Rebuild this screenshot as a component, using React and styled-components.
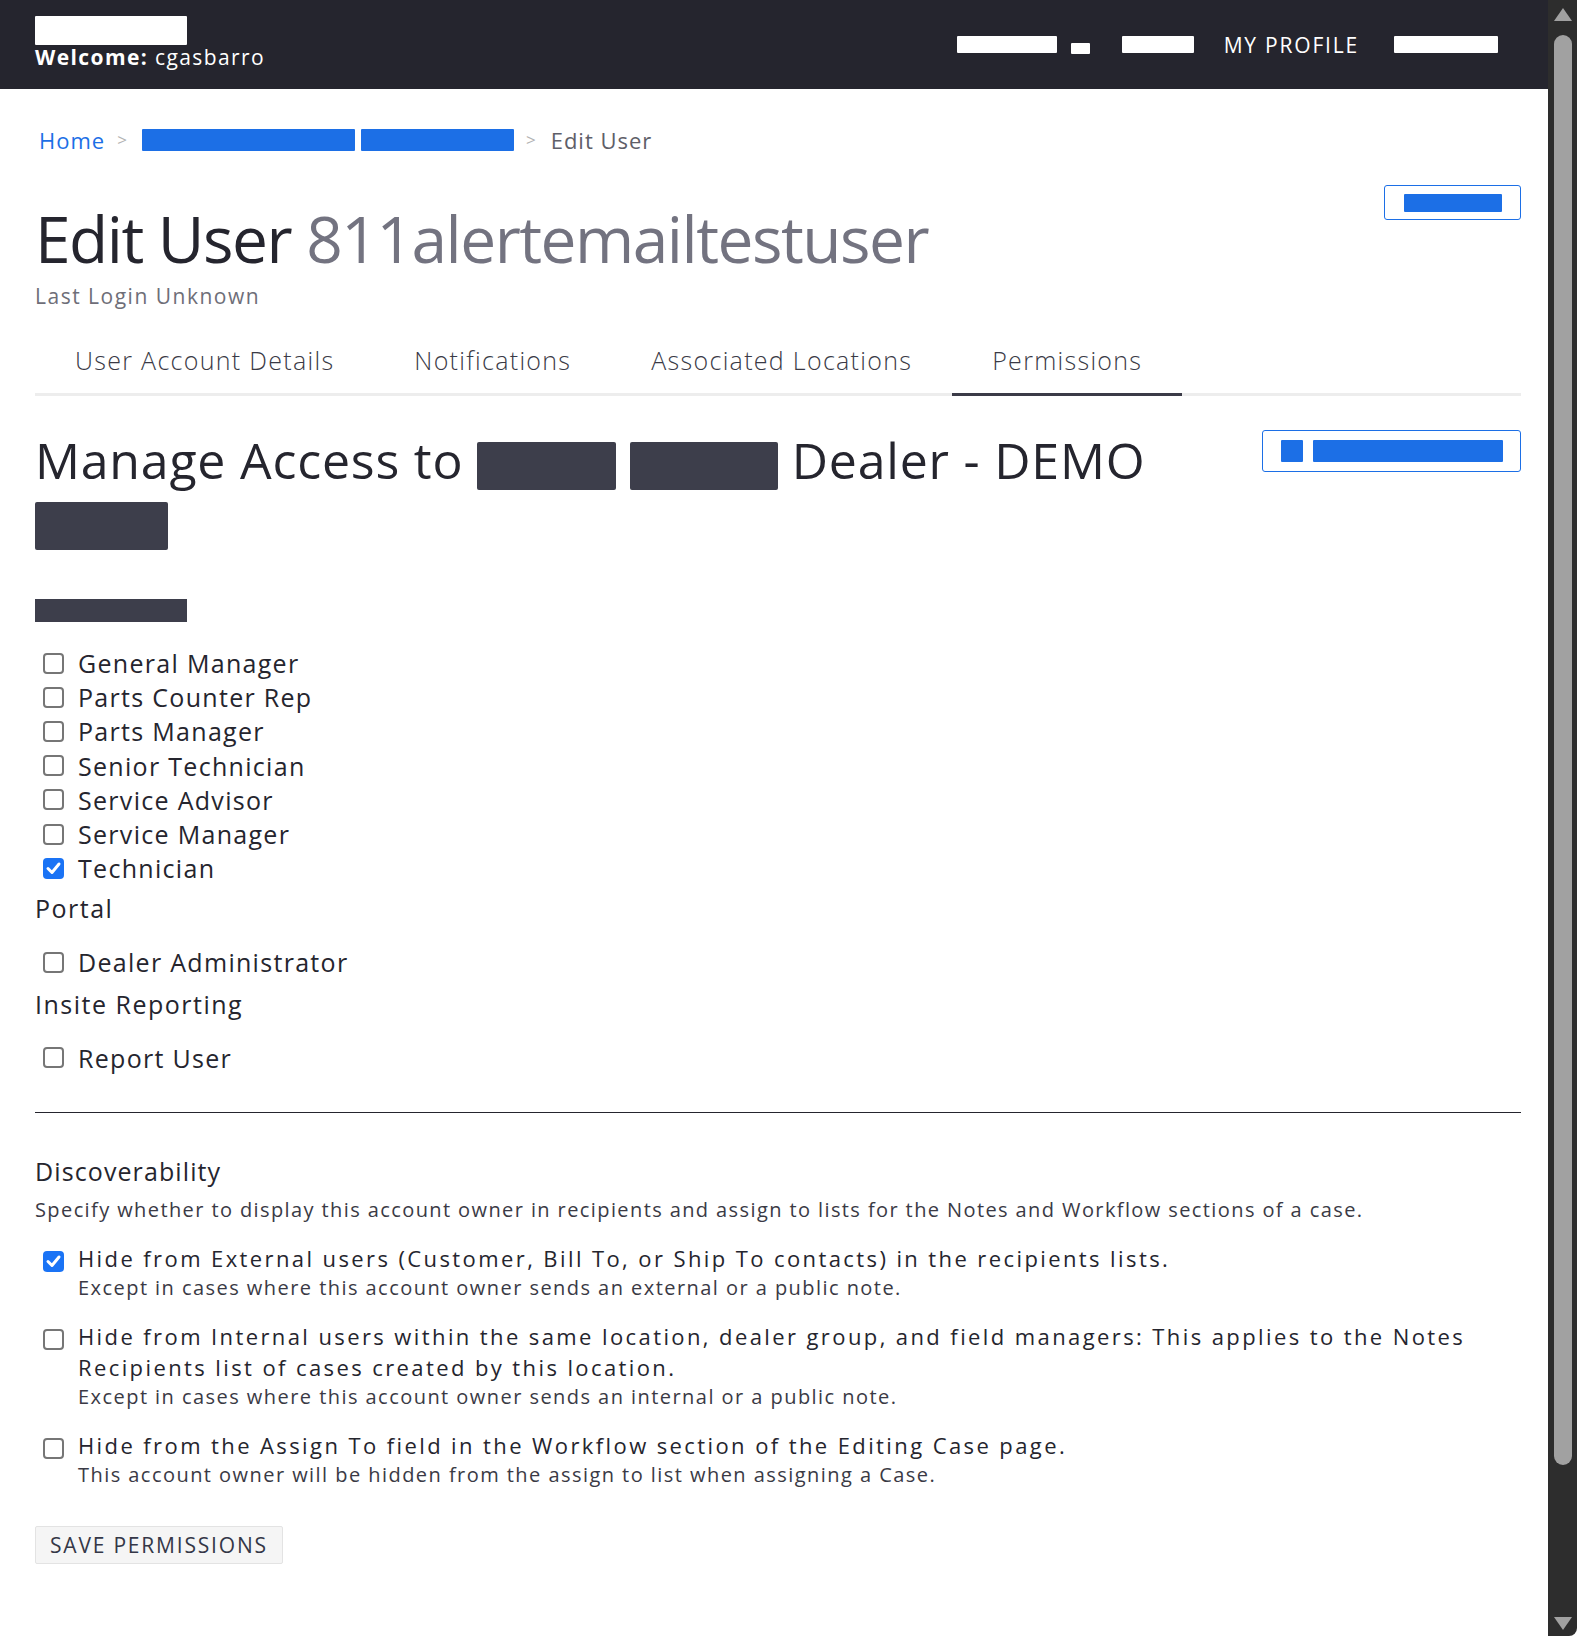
import React from 'react';
import styled, { createGlobalStyle } from 'styled-components';

const GlobalStyle = createGlobalStyle`
  html, body {
    margin: 0;
    padding: 0;
    background: #ffffff;
    font-family: "Open Sans", "Liberation Sans", sans-serif;
    color: #25252e;
  }
  * { box-sizing: border-box; }
`;

const roles = [
  { label: 'General Manager', checked: false },
  { label: 'Parts Counter Rep', checked: false },
  { label: 'Parts Manager', checked: false },
  { label: 'Senior Technician', checked: false },
  { label: 'Service Advisor', checked: false },
  { label: 'Service Manager', checked: false },
  { label: 'Technician', checked: true },
];

const discoverability = [
  {
    checked: true,
    label: 'Hide from External users (Customer, Bill To, or Ship To contacts) in the recipients lists.',
    note: 'Except in cases where this account owner sends an external or a public note.',
  },
  {
    checked: false,
    label: 'Hide from Internal users within the same location, dealer group, and field managers: This applies to the Notes Recipients list of cases created by this location.',
    note: 'Except in cases where this account owner sends an internal or a public note.',
  },
  {
    checked: false,
    label: 'Hide from the Assign To field in the Workflow section of the Editing Case page.',
    note: 'This account owner will be hidden from the assign to list when assigning a Case.',
  },
];

const tabs = ['User Account Details', 'Notifications', 'Associated Locations', 'Permissions'];

function CheckBox({ checked }) {
  return (
    <Box checked={checked}>
      {checked && (
        <svg width="21" height="21" viewBox="0 0 21 21">
          <polyline points="5,10.5 9,14.5 16,6" fill="none" stroke="#fff" strokeWidth="3" strokeLinecap="round" strokeLinejoin="round" />
        </svg>
      )}
    </Box>
  );
}

export default function App() {
  return (
    <>
      <GlobalStyle />
      <Screen>
        <Page>
          <Header>
            <Brand>
              <Redact w={152} h={29} color="#ffffff" />
              <Welcome><b>Welcome:</b> cgasbarro</Welcome>
            </Brand>
            <Nav>
              <Redact w={100} h={17} color="#ffffff" />
              <Redact w={19} h={11} color="#ffffff" ml={14} mt={8} />
              <Redact w={72} h={17} color="#ffffff" ml={32} />
              <NavLink>MY PROFILE</NavLink>
              <Redact w={104} h={17} color="#ffffff" ml={35} />
            </Nav>
          </Header>

          <Content>
            <Breadcrumb>
              <Crumb>Home</Crumb>
              <Sep>&gt;</Sep>
              <Redact w={213} h={22} color="#1c6fe6" />
              <Redact w={153} h={22} color="#1c6fe6" ml={6} />
              <Sep>&gt;</Sep>
              <Current>Edit User</Current>
            </Breadcrumb>

            <TitleRow>
              <div>
                <Title>Edit User <UserName>811alertemailtestuser</UserName></Title>
                <LastLogin>Last Login Unknown</LastLogin>
              </div>
              <OutlineButton w={137} h={35}>
                <Redact w={98} h={18} color="#1c6fe6" />
              </OutlineButton>
            </TitleRow>

            <Tabs>
              {tabs.map((t) => (
                <Tab key={t} active={t === 'Permissions'}>{t}</Tab>
              ))}
            </Tabs>

            <ManageRow>
              <Manage>
                Manage Access to <InlineRedact w={139} /> <InlineRedact w={148} /> Dealer - DEMO <InlineRedact w={133} />
              </Manage>
              <OutlineButton w={259} h={42}>
                <Redact w={22} h={22} color="#1c6fe6" />
                <Redact w={190} h={22} color="#1c6fe6" ml={10} />
              </OutlineButton>
            </ManageRow>

            <GroupLabel />

            <RoleList>
              {roles.map((r) => (
                <Role key={r.label}>
                  <CheckBox checked={r.checked} />
                  <RoleText>{r.label}</RoleText>
                </Role>
              ))}
            </RoleList>

            <SubHeading top={8}>Portal</SubHeading>
            <RoleList top={22}>
              <Role>
                <CheckBox checked={false} />
                <RoleText>Dealer Administrator</RoleText>
              </Role>
            </RoleList>

            <SubHeading top={9}>Insite Reporting</SubHeading>
            <RoleList top={22}>
              <Role>
                <CheckBox checked={false} />
                <RoleText>Report User</RoleText>
              </Role>
            </RoleList>

            <Divider />

            <SubHeading top={43} tight>Discoverability</SubHeading>
            <Description>
              Specify whether to display this account owner in recipients and assign to lists for the Notes and Workflow sections of a case.
            </Description>

            <OptionList>
              {discoverability.map((d, i) => (
                <Option key={i}>
                  <OptionBox>
                    <CheckBox checked={d.checked} />
                  </OptionBox>
                  <div>
                    <OptionLabel>{d.label}</OptionLabel>
                    <OptionNote>{d.note}</OptionNote>
                  </div>
                </Option>
              ))}
            </OptionList>

            <SaveButton>SAVE PERMISSIONS</SaveButton>
          </Content>
        </Page>

        <Scrollbar>
          <Arrow />
          <Thumb />
          <Arrow down />
        </Scrollbar>
      </Screen>
    </>
  );
}

const Screen = styled.div`
  display: flex;
  height: 1636px;
  overflow: hidden;
`;

const Page = styled.div`
  flex: 1;
  min-width: 0;
`;

const Header = styled.header`
  height: 89px;
  background: #25252e;
  display: flex;
  justify-content: space-between;
  align-items: flex-start;
  padding: 0 50px 0 35px;
`;

const Brand = styled.div`
  display: flex;
  flex-direction: column;
  padding-top: 16px;
`;

const Welcome = styled.div`
  color: #ffffff;
  font-size: 21px;
  line-height: 24px;
  letter-spacing: 1.4px;
  b { font-weight: 700; }
`;

const Nav = styled.nav`
  display: flex;
  align-items: center;
  height: 89px;
`;

const NavLink = styled.a`
  margin-left: 30px;
  color: #ffffff;
  font-size: 21px;
  font-weight: 500;
  letter-spacing: 1.8px;
`;

const Redact = styled.span`
  display: inline-block;
  flex: none;
  width: ${(p) => p.w}px;
  height: ${(p) => p.h}px;
  margin-left: ${(p) => p.ml || 0}px;
  margin-top: ${(p) => p.mt || 0}px;
  background: ${(p) => p.color};
  border-radius: 1px;
`;

const Content = styled.main`
  padding: 0 27px 0 35px;
`;

const Breadcrumb = styled.div`
  display: flex;
  align-items: center;
  margin-top: 38px;
  height: 26px;
  padding-left: 4px;
  font-size: 22px;
  line-height: 26px;
  letter-spacing: 1px;
`;

const Crumb = styled.a`
  color: #1c6fe6;
`;

const Sep = styled.span`
  color: #b3b3b3;
  font-size: 17px;
  margin: 0 14px 0 12px;
`;

const Current = styled.span`
  color: #5e5e68;
`;

const TitleRow = styled.div`
  display: flex;
  justify-content: space-between;
  align-items: flex-start;
  margin-top: 32px;
`;

const Title = styled.h1`
  margin: 19px 0 0;
  font-size: 64px;
  line-height: 70px;
  font-weight: 400;
  letter-spacing: -1.5px;
  color: #25252e;
`;

const UserName = styled.span`
  color: #737380;
`;

const LastLogin = styled.div`
  margin-top: 9px;
  font-size: 21px;
  line-height: 26px;
  letter-spacing: 1.5px;
  color: #6e6e78;
`;

const OutlineButton = styled.button`
  display: flex;
  align-items: center;
  justify-content: center;
  width: ${(p) => p.w}px;
  height: ${(p) => p.h}px;
  background: #ffffff;
  border: 1.5px solid #1c6fe6;
  border-radius: 3px;
  padding: 0;
  flex: none;
`;

const Tabs = styled.div`
  display: flex;
  margin-top: 25px;
  border-bottom: 3px solid #ededed;
`;

const Tab = styled.div`
  padding: 11px 40px 18px;
  font-size: 25px;
  line-height: 30px;
  font-weight: 300;
  letter-spacing: 1.3px;
  color: #3a3a46;
  margin-bottom: -3px;
  border-bottom: 3px solid ${(p) => (p.active ? '#3b3b47' : 'transparent')};
`;

const ManageRow = styled.div`
  display: flex;
  justify-content: space-between;
  align-items: flex-start;
  margin-top: 34px;
`;

const Manage = styled.h2`
  margin: 0;
  max-width: 1190px;
  font-size: 50px;
  line-height: 60px;
  font-weight: 400;
  letter-spacing: 0.8px;
  color: #25252e;
`;

const InlineRedact = styled.span`
  display: inline-block;
  width: ${(p) => p.w}px;
  height: 48px;
  background: #3d3e4b;
  border-radius: 2px;
  vertical-align: -11px;
`;

const GroupLabel = styled.div`
  width: 152px;
  height: 23px;
  margin-top: 49px;
  background: #3d3e4b;
`;

const RoleList = styled.div`
  display: flex;
  flex-direction: column;
  margin-top: ${(p) => (p.top !== undefined ? p.top : 24)}px;
`;

const Role = styled.label`
  display: flex;
  align-items: center;
  height: 34.2px;
  padding-left: 8px;
  gap: 14px;
`;

const Box = styled.span`
  flex: none;
  width: 21px;
  height: 21px;
  border-radius: 4px;
  border: ${(p) => (p.checked ? 'none' : '2px solid #767676')};
  background: ${(p) => (p.checked ? '#1a73f5' : '#ffffff')};
  display: flex;
  align-items: center;
  justify-content: center;
`;

const RoleText = styled.span`
  font-size: 25px;
  line-height: 34.2px;
  font-weight: 500;
  letter-spacing: 1.3px;
  color: #25252e;
`;

const SubHeading = styled.h3`
  margin: ${(p) => p.top}px 0 0;
  font-size: 25px;
  line-height: 30px;
  font-weight: 500;
  letter-spacing: ${(p) => (p.tight ? '1.1px' : '1.5px')};
  color: #25252e;
`;

const Divider = styled.hr`
  margin: 37px 0 0;
  border: none;
  border-top: 1.5px solid #25252e;
`;

const Description = styled.p`
  margin: 11px 0 0;
  font-size: 20px;
  line-height: 26px;
  letter-spacing: 1.4px;
  color: #3a3a45;
`;

const OptionList = styled.div`
  display: flex;
  flex-direction: column;
  gap: 20px;
  margin-top: 20px;
`;

const Option = styled.div`
  display: flex;
  align-items: flex-start;
  padding-left: 8px;
  gap: 14px;
`;

const OptionBox = styled.div`
  padding-top: 8px;
`;

const OptionLabel = styled.div`
  font-size: 22px;
  line-height: 31px;
  letter-spacing: 2.4px;
  color: #25252e;
`;

const OptionNote = styled.div`
  margin-top: 1px;
  font-size: 20px;
  line-height: 26px;
  letter-spacing: 1.45px;
  color: #3a3a45;
`;

const SaveButton = styled.button`
  display: block;
  margin-top: 38px;
  height: 38px;
  padding: 0 14px;
  background: #f5f5f5;
  border: 1px solid #e3e3e3;
  border-radius: 2px;
  font-family: "Open Sans", "Liberation Sans", sans-serif;
  font-size: 21px;
  letter-spacing: 1.8px;
  color: #343747;
`;

const Scrollbar = styled.div`
  flex: none;
  width: 29px;
  height: 1636px;
  background: #2d2d2d;
  border-bottom-right-radius: 8px;
  display: flex;
  flex-direction: column;
  align-items: center;
  padding: 8px 0 6px;
`;

const Arrow = styled.span`
  flex: none;
  width: 0;
  height: 0;
  border-left: 9px solid transparent;
  border-right: 9px solid transparent;
  ${(p) => (p.down ? 'border-top: 13px solid #a1a1a1;' : 'border-bottom: 13px solid #a1a1a1;')}
  margin-top: ${(p) => (p.down ? 'auto' : '0')};
`;

const Thumb = styled.span`
  flex: none;
  width: 18px;
  height: 1430px;
  margin-top: 14px;
  border-radius: 9px;
  background: #a1a1a1;
`;
